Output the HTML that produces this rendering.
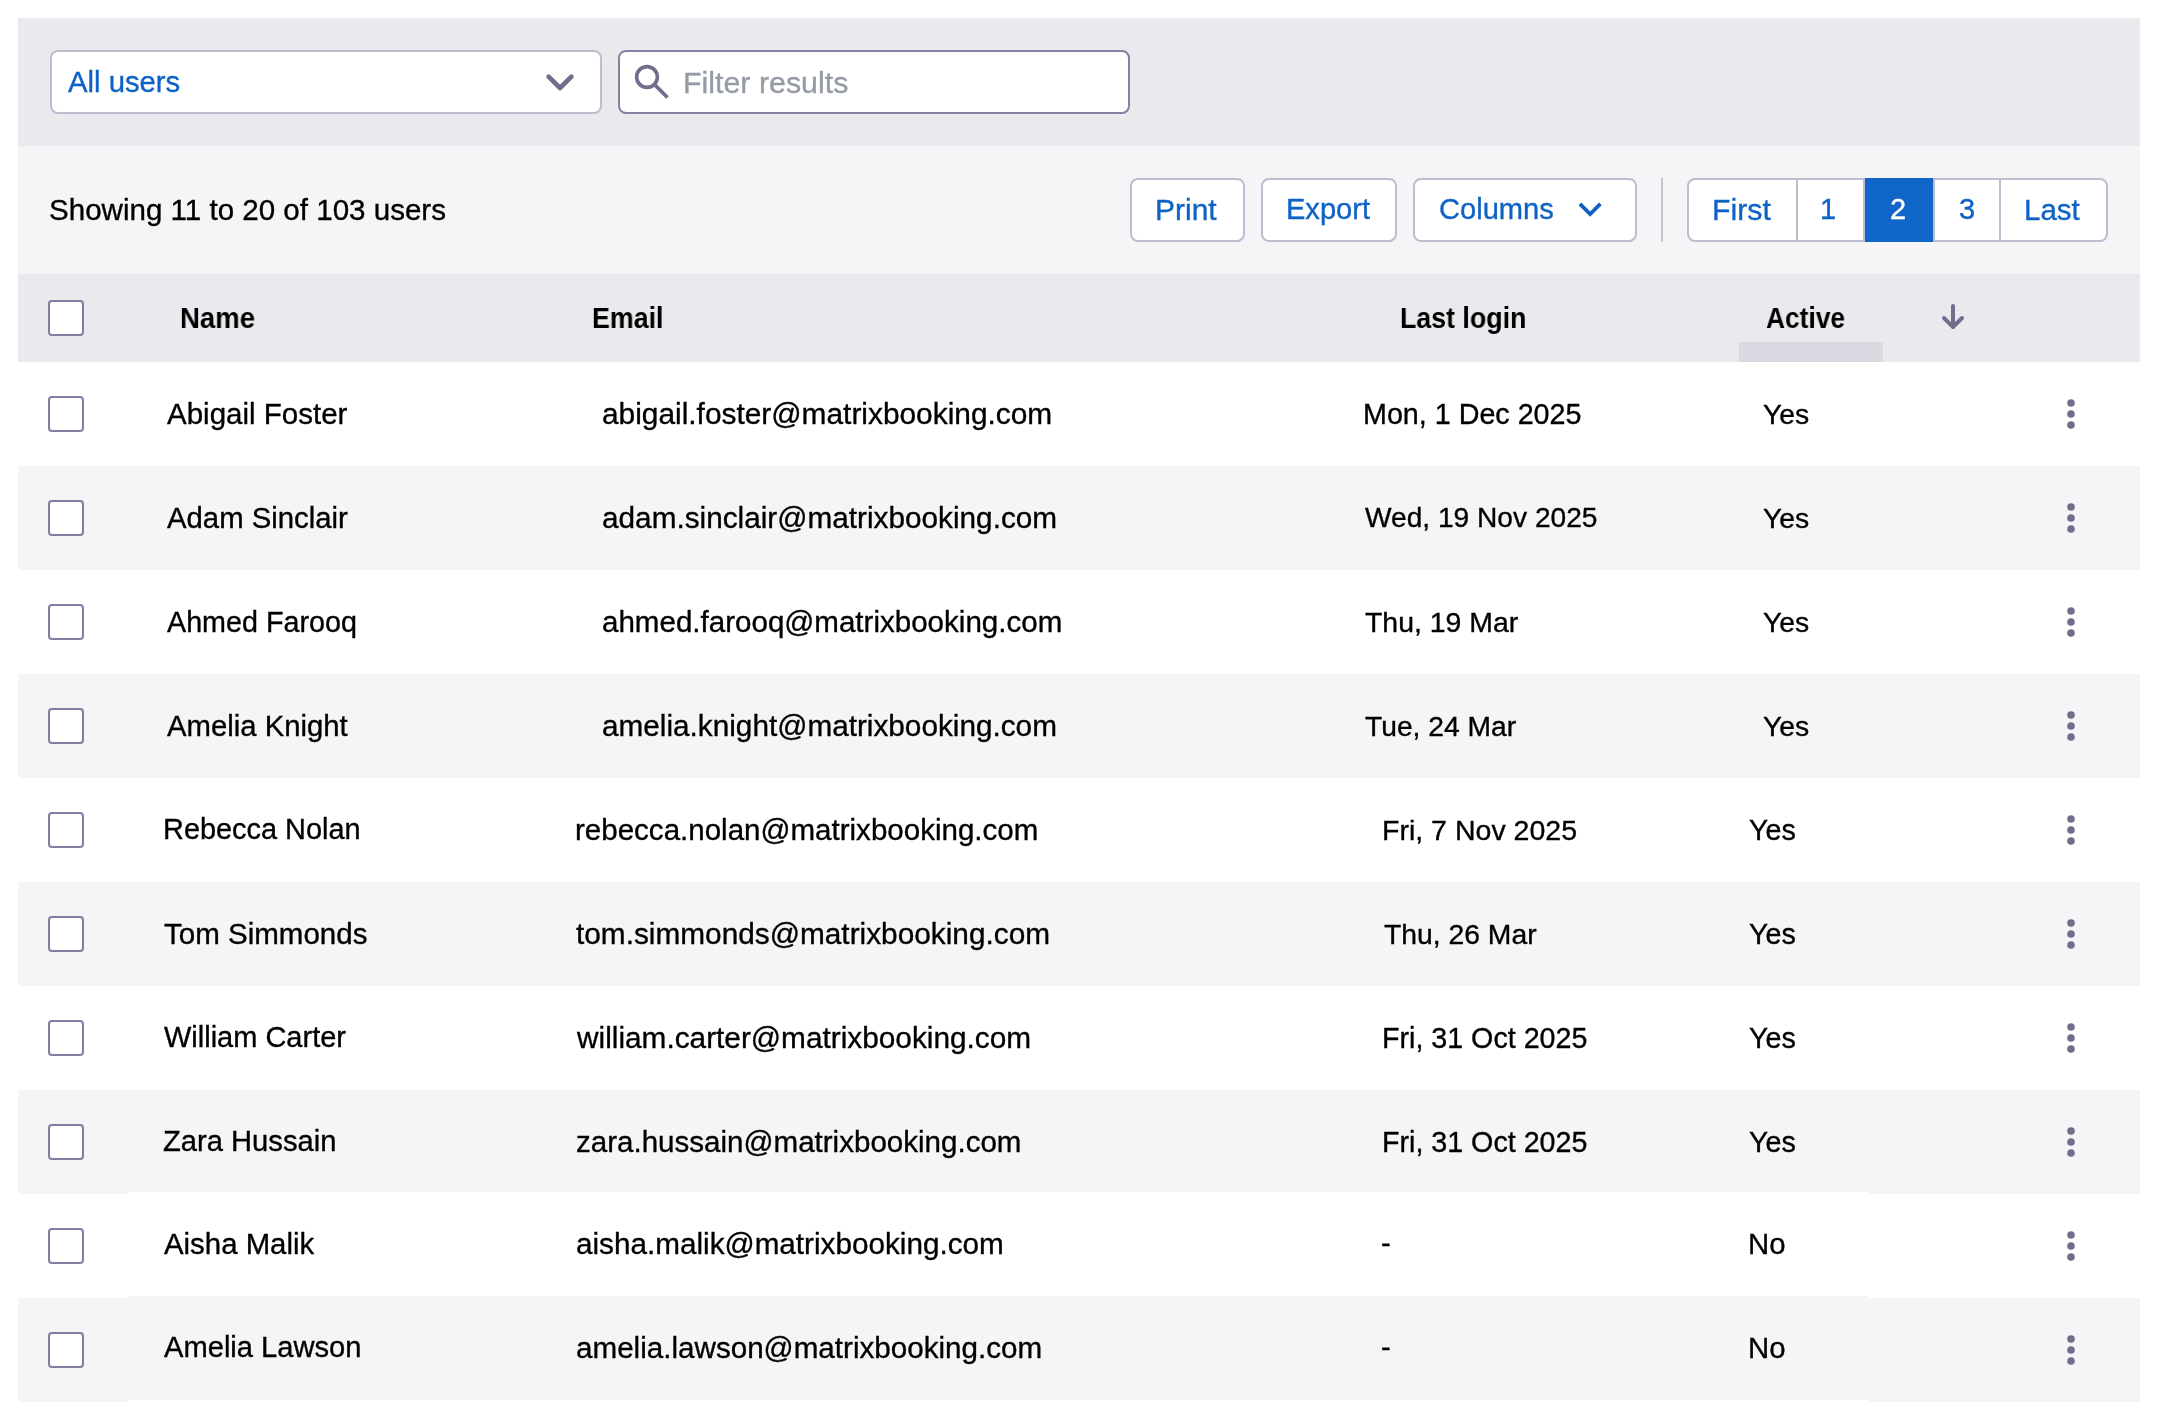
<!DOCTYPE html>
<html><head><meta charset="utf-8"><title>Users</title>
<style>
html,body{margin:0;padding:0;background:#fff;width:2158px;height:1416px;overflow:hidden;}
*{box-sizing:border-box;}
body{font-family:"Liberation Sans",sans-serif;color:#000;position:relative;}
.a{position:absolute;}
.t{position:absolute;white-space:nowrap;line-height:1;will-change:transform;transform-origin:0 0;}
.bx{position:absolute;background:#fff;border:2px solid #BCBDCE;border-radius:8px;}
.cb{position:absolute;left:48px;width:36px;height:36px;border:2px solid #827DA0;border-radius:4px;background:#fff;}
</style></head><body>
<div class="a" style="left:18px;top:18px;width:2122px;height:128px;background:#EAE9EE;"></div>
<div class="bx" style="left:50px;top:50px;width:552px;height:64px;"></div>
<svg class="a" style="left:540px;top:66px" width="40" height="32" viewBox="0 0 40 32"><polyline points="8.6,10.6 20,22 31.4,10.6" fill="none" stroke="#736C8C" stroke-width="4.6" stroke-linecap="round" stroke-linejoin="round"/></svg>
<div class="bx" style="left:618px;top:50px;width:512px;height:64px;border-color:#8581A0;"></div>
<svg class="a" style="left:630px;top:60px" width="44" height="44" viewBox="0 0 44 44"><circle cx="17" cy="17" r="10.4" fill="none" stroke="#736C8C" stroke-width="3.6"/><line x1="24.5" y1="24.5" x2="37.5" y2="37.5" stroke="#736C8C" stroke-width="3.8"/></svg>
<div class="a" style="left:18px;top:146px;width:2122px;height:128px;background:#F5F5F7;"></div>
<div class="bx" style="left:1130px;top:178px;width:115px;height:64px;"></div>
<div class="bx" style="left:1261px;top:178px;width:136px;height:64px;"></div>
<div class="bx" style="left:1413px;top:178px;width:224px;height:64px;"></div>
<svg class="a" style="left:1567.4px;top:185.7px" width="46.3" height="46.3" viewBox="0 0 24 24"><path d="M16.59 8.59L12 13.17 7.41 8.59 6 10l6 6 6-6z" fill="#0F62C5"/></svg>
<div class="a" style="left:1661px;top:178px;width:2px;height:64px;background:#C4C3D0;"></div>
<div class="bx" style="left:1687px;top:178px;width:421px;height:64px;"></div>
<div class="a" style="left:1796px;top:178px;width:2px;height:64px;background:#BCBDCE;"></div>
<div class="a" style="left:1863px;top:178px;width:2px;height:64px;background:#BCBDCE;"></div>
<div class="a" style="left:1933px;top:178px;width:2px;height:64px;background:#BCBDCE;"></div>
<div class="a" style="left:1999px;top:178px;width:2px;height:64px;background:#BCBDCE;"></div>
<div class="a" style="left:1865px;top:178px;width:68px;height:64px;background:#0F65C8;"></div>
<div class="a" style="left:18px;top:274px;width:2122px;height:88px;background:#EAE9EE;"></div>
<div class="cb" style="top:300px"></div>
<div class="a" style="left:1739px;top:342px;width:144px;height:20px;background:#DAD9E1;"></div>
<svg class="a" style="left:1933px;top:294px" width="40" height="44" viewBox="0 0 40 44"><line x1="20" y1="12" x2="20" y2="32" stroke="#736C8C" stroke-width="4" stroke-linecap="round"/><polyline points="11,24 20,33 29,24" fill="none" stroke="#736C8C" stroke-width="4" stroke-linecap="round" stroke-linejoin="round"/></svg>
<div class="a" style="left:18px;top:466px;width:2122px;height:104px;background:#F5F5F7;"></div>
<div class="a" style="left:18px;top:674px;width:2122px;height:104px;background:#F5F5F7;"></div>
<div class="a" style="left:18px;top:882px;width:2122px;height:104px;background:#F5F5F7;"></div>
<div class="a" style="left:18px;top:1090px;width:2122px;height:104px;background:#F5F5F7;"></div>
<div class="a" style="left:18px;top:1298px;width:110px;height:104px;background:#F5F5F7;"></div>
<div class="a" style="left:1869px;top:1298px;width:271px;height:104px;background:#F5F5F7;"></div>
<div class="a" style="left:128px;top:1296px;width:1741px;height:104px;background:#F5F5F7;"></div>
<div class="a" style="left:128px;top:1192px;width:1741px;height:2px;background:#fff;"></div>
<div class="cb" style="top:396px"></div>
<svg class="a" style="left:2061px;top:394px" width="20" height="40" viewBox="0 0 20 40"><circle cx="10" cy="9" r="3.8" fill="#736C8C"/><circle cx="10" cy="20" r="3.8" fill="#736C8C"/><circle cx="10" cy="31" r="3.8" fill="#736C8C"/></svg>
<div class="cb" style="top:500px"></div>
<svg class="a" style="left:2061px;top:498px" width="20" height="40" viewBox="0 0 20 40"><circle cx="10" cy="9" r="3.8" fill="#736C8C"/><circle cx="10" cy="20" r="3.8" fill="#736C8C"/><circle cx="10" cy="31" r="3.8" fill="#736C8C"/></svg>
<div class="cb" style="top:604px"></div>
<svg class="a" style="left:2061px;top:602px" width="20" height="40" viewBox="0 0 20 40"><circle cx="10" cy="9" r="3.8" fill="#736C8C"/><circle cx="10" cy="20" r="3.8" fill="#736C8C"/><circle cx="10" cy="31" r="3.8" fill="#736C8C"/></svg>
<div class="cb" style="top:708px"></div>
<svg class="a" style="left:2061px;top:706px" width="20" height="40" viewBox="0 0 20 40"><circle cx="10" cy="9" r="3.8" fill="#736C8C"/><circle cx="10" cy="20" r="3.8" fill="#736C8C"/><circle cx="10" cy="31" r="3.8" fill="#736C8C"/></svg>
<div class="cb" style="top:812px"></div>
<svg class="a" style="left:2061px;top:810px" width="20" height="40" viewBox="0 0 20 40"><circle cx="10" cy="9" r="3.8" fill="#736C8C"/><circle cx="10" cy="20" r="3.8" fill="#736C8C"/><circle cx="10" cy="31" r="3.8" fill="#736C8C"/></svg>
<div class="cb" style="top:916px"></div>
<svg class="a" style="left:2061px;top:914px" width="20" height="40" viewBox="0 0 20 40"><circle cx="10" cy="9" r="3.8" fill="#736C8C"/><circle cx="10" cy="20" r="3.8" fill="#736C8C"/><circle cx="10" cy="31" r="3.8" fill="#736C8C"/></svg>
<div class="cb" style="top:1020px"></div>
<svg class="a" style="left:2061px;top:1018px" width="20" height="40" viewBox="0 0 20 40"><circle cx="10" cy="9" r="3.8" fill="#736C8C"/><circle cx="10" cy="20" r="3.8" fill="#736C8C"/><circle cx="10" cy="31" r="3.8" fill="#736C8C"/></svg>
<div class="cb" style="top:1124px"></div>
<svg class="a" style="left:2061px;top:1122px" width="20" height="40" viewBox="0 0 20 40"><circle cx="10" cy="9" r="3.8" fill="#736C8C"/><circle cx="10" cy="20" r="3.8" fill="#736C8C"/><circle cx="10" cy="31" r="3.8" fill="#736C8C"/></svg>
<div class="cb" style="top:1228px"></div>
<svg class="a" style="left:2061px;top:1226px" width="20" height="40" viewBox="0 0 20 40"><circle cx="10" cy="9" r="3.8" fill="#736C8C"/><circle cx="10" cy="20" r="3.8" fill="#736C8C"/><circle cx="10" cy="31" r="3.8" fill="#736C8C"/></svg>
<div class="cb" style="top:1332px"></div>
<svg class="a" style="left:2061px;top:1330px" width="20" height="40" viewBox="0 0 20 40"><circle cx="10" cy="9" r="3.8" fill="#736C8C"/><circle cx="10" cy="20" r="3.8" fill="#736C8C"/><circle cx="10" cy="31" r="3.8" fill="#736C8C"/></svg>
<div class="t" style="left:68.0px;top:66.5px;font-size:29.28px;color:#0F62C5;-webkit-text-stroke:0.35px currentColor;">All users</div>
<div class="t" style="left:682.6px;top:67.5px;font-size:30.36px;color:#959BA6;-webkit-text-stroke:0.35px currentColor;">Filter results</div>
<div class="t" style="left:49.1px;top:195.1px;font-size:29.55px;color:#000;-webkit-text-stroke:0.35px currentColor;">Showing 11 to 20 of 103 users</div>
<div class="t" style="left:1155.4px;top:194.9px;font-size:29.97px;color:#0F62C5;-webkit-text-stroke:0.35px currentColor;">Print</div>
<div class="t" style="left:1286.1px;top:195.3px;font-size:29.05px;color:#0F62C5;-webkit-text-stroke:0.35px currentColor;">Export</div>
<div class="t" style="left:1439.2px;top:195.3px;font-size:29.08px;color:#0F62C5;-webkit-text-stroke:0.35px currentColor;">Columns</div>
<div class="t" style="left:1711.9px;top:194.7px;font-size:30.28px;color:#0F62C5;-webkit-text-stroke:0.35px currentColor;">First</div>
<div class="t" style="left:1820.2px;top:195.4px;font-size:29px;color:#0F62C5;-webkit-text-stroke:0.35px currentColor;">1</div>
<div class="t" style="left:1890.3px;top:194.9px;font-size:29px;color:#fff;-webkit-text-stroke:0.35px currentColor;">2</div>
<div class="t" style="left:1959.2px;top:195.4px;font-size:29px;color:#0F62C5;-webkit-text-stroke:0.35px currentColor;">3</div>
<div class="t" style="left:2024.3px;top:195.1px;font-size:29.52px;color:#0F62C5;-webkit-text-stroke:0.35px currentColor;">Last</div>
<div class="t" style="left:180.3px;top:304.1px;font-size:29.2px;color:#000;font-weight:700;transform:scaleX(0.944);">Name</div>
<div class="t" style="left:592.4px;top:304.1px;font-size:29.2px;color:#000;font-weight:700;transform:scaleX(0.9168);">Email</div>
<div class="t" style="left:1399.9px;top:304.1px;font-size:29.2px;color:#000;font-weight:700;transform:scaleX(0.9169);">Last login</div>
<div class="t" style="left:1766.3px;top:304.1px;font-size:29.2px;color:#000;font-weight:700;transform:scaleX(0.9027);">Active</div>
<div class="t" style="left:167.2px;top:399.1px;font-size:29.5px;color:#000;-webkit-text-stroke:0.35px currentColor;">Abigail Foster</div>
<div class="t" style="left:601.8px;top:398.9px;font-size:29.87px;color:#000;-webkit-text-stroke:0.35px currentColor;">abigail.foster@matrixbooking.com</div>
<div class="t" style="left:1363.1px;top:399.5px;font-size:28.69px;color:#000;-webkit-text-stroke:0.35px currentColor;">Mon, 1 Dec 2025</div>
<div class="t" style="left:1762.9px;top:399.7px;font-size:28.39px;color:#000;-webkit-text-stroke:0.35px currentColor;">Yes</div>
<div class="t" style="left:167.2px;top:503.2px;font-size:29.32px;color:#000;-webkit-text-stroke:0.35px currentColor;">Adam Sinclair</div>
<div class="t" style="left:601.8px;top:503.0px;font-size:29.75px;color:#000;-webkit-text-stroke:0.35px currentColor;">adam.sinclair@matrixbooking.com</div>
<div class="t" style="left:1365.4px;top:503.8px;font-size:28.13px;color:#000;-webkit-text-stroke:0.35px currentColor;">Wed, 19 Nov 2025</div>
<div class="t" style="left:1762.9px;top:503.7px;font-size:28.39px;color:#000;-webkit-text-stroke:0.35px currentColor;">Yes</div>
<div class="t" style="left:167.4px;top:607.5px;font-size:28.71px;color:#000;-webkit-text-stroke:0.35px currentColor;">Ahmed Farooq</div>
<div class="t" style="left:601.8px;top:607.1px;font-size:29.55px;color:#000;-webkit-text-stroke:0.35px currentColor;">ahmed.farooq@matrixbooking.com</div>
<div class="t" style="left:1364.8px;top:607.6px;font-size:28.44px;color:#000;-webkit-text-stroke:0.35px currentColor;">Thu, 19 Mar</div>
<div class="t" style="left:1762.9px;top:607.7px;font-size:28.39px;color:#000;-webkit-text-stroke:0.35px currentColor;">Yes</div>
<div class="t" style="left:167.2px;top:711.2px;font-size:29.29px;color:#000;-webkit-text-stroke:0.35px currentColor;">Amelia Knight</div>
<div class="t" style="left:601.8px;top:711.0px;font-size:29.74px;color:#000;-webkit-text-stroke:0.35px currentColor;">amelia.knight@matrixbooking.com</div>
<div class="t" style="left:1364.8px;top:711.7px;font-size:28.23px;color:#000;-webkit-text-stroke:0.35px currentColor;">Tue, 24 Mar</div>
<div class="t" style="left:1762.9px;top:711.7px;font-size:28.39px;color:#000;-webkit-text-stroke:0.35px currentColor;">Yes</div>
<div class="t" style="left:162.9px;top:815.4px;font-size:28.92px;color:#000;-webkit-text-stroke:0.35px currentColor;">Rebecca Nolan</div>
<div class="t" style="left:574.9px;top:815.1px;font-size:29.54px;color:#000;-webkit-text-stroke:0.35px currentColor;">rebecca.nolan@matrixbooking.com</div>
<div class="t" style="left:1382.0px;top:815.6px;font-size:28.54px;color:#000;-webkit-text-stroke:0.35px currentColor;">Fri, 7 Nov 2025</div>
<div class="t" style="left:1748.6px;top:815.5px;font-size:28.71px;color:#000;-webkit-text-stroke:0.35px currentColor;">Yes</div>
<div class="t" style="left:163.7px;top:919.1px;font-size:29.54px;color:#000;-webkit-text-stroke:0.35px currentColor;">Tom Simmonds</div>
<div class="t" style="left:576.4px;top:918.9px;font-size:29.81px;color:#000;-webkit-text-stroke:0.35px currentColor;">tom.simmonds@matrixbooking.com</div>
<div class="t" style="left:1383.7px;top:919.7px;font-size:28.31px;color:#000;-webkit-text-stroke:0.35px currentColor;">Thu, 26 Mar</div>
<div class="t" style="left:1748.6px;top:919.5px;font-size:28.71px;color:#000;-webkit-text-stroke:0.35px currentColor;">Yes</div>
<div class="t" style="left:164.3px;top:1023.4px;font-size:28.99px;color:#000;-webkit-text-stroke:0.35px currentColor;">William Carter</div>
<div class="t" style="left:577.0px;top:1022.9px;font-size:29.81px;color:#000;-webkit-text-stroke:0.35px currentColor;">william.carter@matrixbooking.com</div>
<div class="t" style="left:1382.0px;top:1023.5px;font-size:28.65px;color:#000;-webkit-text-stroke:0.35px currentColor;">Fri, 31 Oct 2025</div>
<div class="t" style="left:1748.6px;top:1023.5px;font-size:28.71px;color:#000;-webkit-text-stroke:0.35px currentColor;">Yes</div>
<div class="t" style="left:163.4px;top:1127.3px;font-size:29.16px;color:#000;-webkit-text-stroke:0.35px currentColor;">Zara Hussain</div>
<div class="t" style="left:575.5px;top:1127.1px;font-size:29.56px;color:#000;-webkit-text-stroke:0.35px currentColor;">zara.hussain@matrixbooking.com</div>
<div class="t" style="left:1382.0px;top:1127.5px;font-size:28.65px;color:#000;-webkit-text-stroke:0.35px currentColor;">Fri, 31 Oct 2025</div>
<div class="t" style="left:1748.6px;top:1127.5px;font-size:28.71px;color:#000;-webkit-text-stroke:0.35px currentColor;">Yes</div>
<div class="t" style="left:164.3px;top:1229.2px;font-size:29.38px;color:#000;-webkit-text-stroke:0.35px currentColor;">Aisha Malik</div>
<div class="t" style="left:575.5px;top:1229.0px;font-size:29.7px;color:#000;-webkit-text-stroke:0.35px currentColor;">aisha.malik@matrixbooking.com</div>
<div class="t" style="left:1381.1px;top:1229.4px;font-size:29px;color:#000;-webkit-text-stroke:0.35px currentColor;">-</div>
<div class="t" style="left:1747.9px;top:1229.2px;font-size:29.34px;color:#000;-webkit-text-stroke:0.35px currentColor;">No</div>
<div class="t" style="left:164.3px;top:1333.3px;font-size:29.13px;color:#000;-webkit-text-stroke:0.35px currentColor;">Amelia Lawson</div>
<div class="t" style="left:575.5px;top:1333.0px;font-size:29.61px;color:#000;-webkit-text-stroke:0.35px currentColor;">amelia.lawson@matrixbooking.com</div>
<div class="t" style="left:1381.1px;top:1333.4px;font-size:29px;color:#000;-webkit-text-stroke:0.35px currentColor;">-</div>
<div class="t" style="left:1747.9px;top:1333.2px;font-size:29.34px;color:#000;-webkit-text-stroke:0.35px currentColor;">No</div>
</body></html>
